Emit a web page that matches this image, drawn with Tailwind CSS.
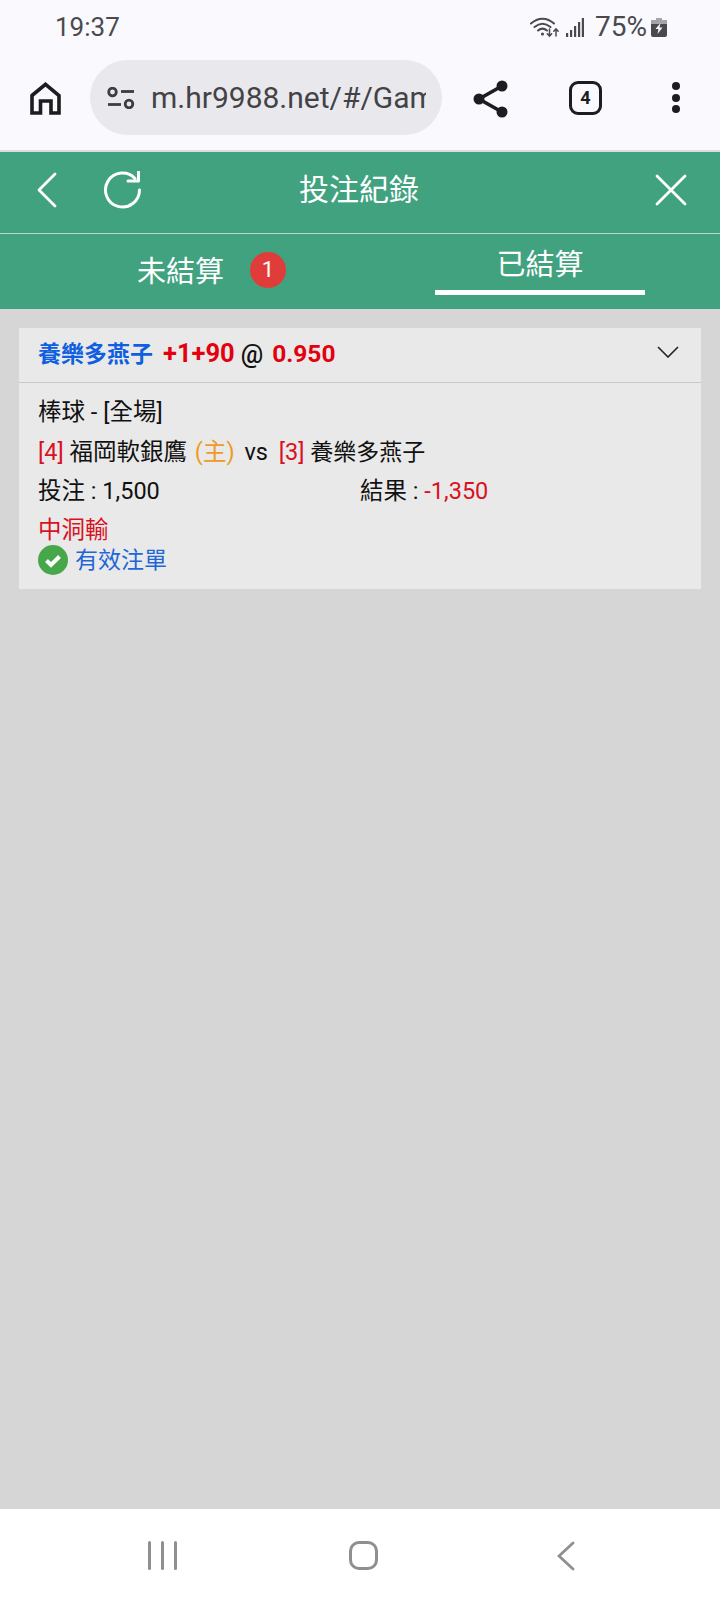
<!DOCTYPE html>
<html lang="zh-Hant">
  <head>
    <meta charset="UTF-8" />
    <meta name="viewport" content="width=device-width, initial-scale=1.0" />
    <title>投注紀錄</title>
    <script src="https://cdn.jsdelivr.net/npm/@tailwindcss/browser@4"></script>
  </head>
  <body class="w-[720px] h-[1600px] overflow-hidden flex flex-col bg-[#d6d6d6] font-['Roboto','Noto_Sans_CJK_TC',sans-serif]">
    <!-- phone status bar -->
    <div class="h-[50px] shrink-0 bg-[#f9f9fe] flex items-center pl-[55px] pr-[53px] pt-[4px] text-[#4a4a4e]">
      <span class="text-[26px] leading-none">19:37</span>
      <div class="ml-auto flex items-center">
        <svg class="w-[30px] h-[22px]" viewBox="0 0 30 22" fill="none" stroke="#4a4a4e" stroke-linecap="round">
          <path d="M1 7.500C8 1 17 1 24 7.500" stroke-width="2" />
          <path d="M4.500 11C10 6.500 15 6.500 20.500 11" stroke-width="2" />
          <path d="M8 14.500C11 12 14 12 17 14.500" stroke-width="2" />
          <circle cx="12.500" cy="18" r="1.600" fill="#4a4a4e" stroke="none" />
          <path d="M19.500 13v7M17.300 17.800l2.200 2.400 2.200-2.400" stroke-width="1.500" />
          <path d="M26 20v-7M23.800 15.200l2.200-2.400 2.200 2.400" stroke-width="1.500" />
        </svg>
        <svg class="w-[18px] h-[19px] ml-[6px]" viewBox="0 0 18 19" fill="#4a4a4e">
          <rect x="0" y="15" width="2.200" height="4" />
          <rect x="4" y="12" width="2.200" height="7" />
          <rect x="8" y="8" width="2.200" height="11" />
          <rect x="12" y="4" width="2.200" height="15" />
          <rect x="15.800" y="0" width="2.200" height="19" />
        </svg>
        <span class="text-[28px] leading-none ml-[11px]">75%</span>
        <svg class="w-[16px] h-[19px] ml-[4px]" viewBox="0 0 16 19">
          <path d="M5 0h6v2h3a2 2 0 0 1 2 2v13a2 2 0 0 1-2 2H2a2 2 0 0 1-2-2V4a2 2 0 0 1 2-2h3z" fill="#4a4a4e" />
          <path d="M0 4a2 2 0 0 1 2-2h3V0h6v2h3a2 2 0 0 1 2 2v2H0z" fill="#a5a5a8" />
          <path d="M9.500 5 4.500 11h3l-1 5 5-6.500h-3z" fill="#f9f9fe" />
        </svg>
      </div>
    </div>

    <!-- browser toolbar -->
    <div class="h-[102px] shrink-0 bg-[#f9f9fe] flex items-start pt-[10px] border-b-2 border-[#dcdce0]">
      <div class="w-[90px] shrink-0 flex justify-start pl-[30px] pt-[22px]">
        <svg class="w-[31px] h-[33px]" viewBox="0 0 31 33" fill="none" stroke="#1d1d20" stroke-width="3.600" stroke-linejoin="miter">
          <path d="M2 13.500 15.500 2.300 29 13.500V31H21V19H10.500V31H2z" />
        </svg>
      </div>
      <div class="w-[352px] h-[75px] shrink-0 rounded-full bg-[#e9e9ed] flex items-center pl-[17px] pr-[16px]">
        <svg class="w-[28px] h-[22px] shrink-0" viewBox="0 0 28 22" fill="none" stroke="#3d3d40" stroke-width="2.800">
          <circle cx="5.500" cy="5" r="3.800" />
          <path d="M14 4.500h13" />
          <path d="M1 17.500h13" />
          <circle cx="22" cy="17" r="3.800" />
        </svg>
        <div class="ml-[16px] overflow-hidden whitespace-nowrap text-[30px] leading-none text-[#434347]">m.hr9988.net/#/Gam</div>
      </div>
      <div class="flex-1 h-[60px] flex items-start pt-[19px]">
        <svg class="w-[36px] h-[40px] ml-[31px] shrink-0" viewBox="0 0 36 40" fill="#1d1d20" stroke="#1d1d20">
          <path d="M29 7 6 20l23 13" fill="none" stroke-width="3.600" />
          <circle cx="29" cy="7" r="5.500" stroke="none" />
          <circle cx="6" cy="20" r="5.500" stroke="none" />
          <circle cx="29" cy="33" r="5.500" stroke="none" />
        </svg>
        <div class="w-[33px] h-[34px] ml-[60px] mt-[2px] shrink-0 rounded-[9px] border-[3.500px] border-[#1d1d20] flex items-center justify-center text-[18px] font-bold leading-none text-[#1d1d20]">4</div>
        <div class="ml-[70px] mt-[3px] shrink-0 flex flex-col gap-[3.500px]">
          <div class="w-[8px] h-[8px] rounded-full bg-[#1d1d20]"></div>
          <div class="w-[8px] h-[8px] rounded-full bg-[#1d1d20]"></div>
          <div class="w-[8px] h-[8px] rounded-full bg-[#1d1d20]"></div>
        </div>
      </div>
    </div>

    <!-- page header -->
    <div class="h-[82px] shrink-0 bg-[#41a27f] border-b border-[#b5d9cb] flex items-center pb-[5px] text-white">
      <svg class="w-[20px] h-[36px] ml-[37px]" viewBox="0 0 20 36" fill="none" stroke="white" stroke-width="2.800" stroke-linecap="round" stroke-linejoin="round">
        <path d="M18 2 2 18l16 16" />
      </svg>
      <svg class="w-[40px] h-[38px] ml-[46px]" viewBox="0 0 40 38" fill="none" stroke="white" stroke-width="3" stroke-linecap="round" stroke-linejoin="round">
        <path d="M32 7.500A17 17 0 1 0 36.500 19" />
        <path d="M25 10H35.500V1" />
      </svg>
      <div class="flex-1 text-center text-[30px] leading-none pr-[80px]">投注紀錄</div>
      <svg class="w-[32px] h-[32px] mr-[33px]" viewBox="0 0 32 32" fill="none" stroke="white" stroke-width="2.800" stroke-linecap="round">
        <path d="M2 2l28 28M30 2 2 30" />
      </svg>
    </div>

    <!-- tabs -->
    <div class="h-[75px] shrink-0 bg-[#41a27f] flex text-white">
      <div class="w-[360px] flex items-center">
        <span class="ml-[137px] mt-[2px] text-[29px] leading-none">未結算</span>
        <span class="ml-[26px] w-[36px] h-[36px] mt-[-4px] rounded-full bg-[#e03d3a] flex items-center justify-center text-[22px] leading-none">1</span>
      </div>
      <div class="w-[360px] pl-[75px] pt-[17px]">
        <div class="w-[210px] h-[44px] border-b-[5px] border-white text-center text-[29px] leading-none">已結算</div>
      </div>
    </div>

    <!-- bet list -->
    <div class="flex-1 px-[19px] pt-[19px]">
      <div class="bg-[#e9e9e9]">
        <div class="h-[55px] border-b border-[#c9c9c9] flex items-center pl-[19px] pr-[22px] pb-[2px] text-[25px] leading-none font-bold">
          <span class="text-[23px] text-[#0f5fe0]">養樂多燕子</span>
          <span class="ml-[10px] text-[25.500px] text-[#e3000f]">+1+90</span>
          <span class="ml-[6px] text-[#111] font-medium">@</span>
          <span class="ml-[9px] text-[24.500px] text-[#e3000f]">0.950</span>
          <svg class="ml-auto mb-[4px] w-[22px] h-[12px]" viewBox="0 0 22 12" fill="none" stroke="#222" stroke-width="1.600">
            <path d="M1 1l10 10L21 1" />
          </svg>
        </div>
        <div class="pl-[19px] pt-[9px] pb-[14px] text-[23.500px] text-[#111]">
          <div class="h-[40px] leading-[40px]">棒球 - [全場]</div>
          <div class="h-[40px] leading-[40px]">
            <span class="text-[#d8121f]">[4]</span> 福岡軟銀鷹
            <span class="ml-[2px] text-[#ef9a26]">(主)</span>
            <span class="ml-[4px]">vs</span>
            <span class="ml-[5px] text-[#d8121f]">[3]</span> <span class="text-[23px]">養樂多燕子</span>
          </div>
          <div class="h-[40px] leading-[39px] flex">
            <div class="w-[322px]">投注 : 1,500</div>
            <div>結果 : <span class="text-[#d8121f]">-1,350</span></div>
          </div>
          <div class="h-[30px] leading-[30px] mt-[3px] text-[#d8121f]">中洞輸</div>
          <div class="h-[30px] flex items-center">
            <svg class="w-[30px] h-[30px]" viewBox="0 0 30 30">
              <circle cx="15" cy="15" r="15" fill="#47a84b" />
              <path d="M8.500 15.500l4.500 4.500 8.500-8.500" fill="none" stroke="white" stroke-width="4" />
            </svg>
            <span class="ml-[7px] text-[23px] text-[#1f66d6] leading-none">有效注單</span>
          </div>
        </div>
      </div>
    </div>

    <!-- phone nav bar -->
    <div class="h-[91px] shrink-0 bg-white flex items-start pt-[32px]">
      <div class="ml-[148px] flex gap-[10px]">
        <div class="w-[3px] h-[29px] rounded-full bg-[#8f8f8f]"></div>
        <div class="w-[3px] h-[29px] rounded-full bg-[#8f8f8f]"></div>
        <div class="w-[3px] h-[29px] rounded-full bg-[#8f8f8f]"></div>
      </div>
      <div class="ml-[172px] w-[29px] h-[29px] rounded-[10px] border-[3px] border-[#8f8f8f]"></div>
      <svg class="ml-[179px] w-[18px] h-[30px]" viewBox="0 0 18 30" fill="none" stroke="#8f8f8f" stroke-width="2.800" stroke-linecap="round">
        <path d="M16 2 2 15l14 13" />
      </svg>
    </div>
  </body>
</html>
